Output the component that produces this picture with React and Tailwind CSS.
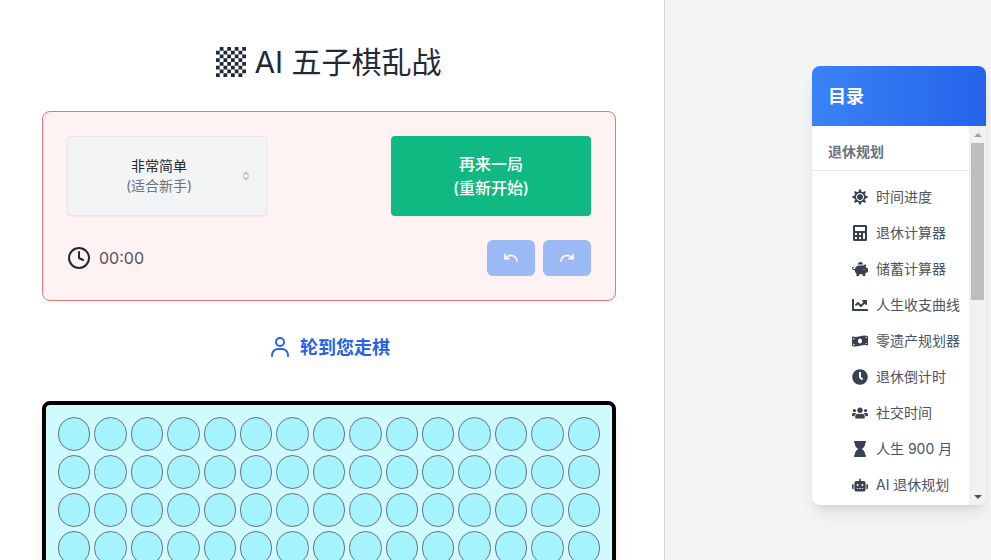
import {
  FaSun,
  FaCalculator,
  FaPiggyBank,
  FaChartLine,
  FaMoneyBillWave,
  FaClock,
  FaUsers,
  FaHourglass,
  FaRobot,
} from 'react-icons/fa';
import { Undo, Redo } from 'lucide-react';

const font = "font-['Inter','Noto_Sans_CJK_SC',sans-serif]";

const retireItems = [
  { icon: FaSun, label: '时间进度' },
  { icon: FaCalculator, label: '退休计算器' },
  { icon: FaPiggyBank, label: '储蓄计算器' },
  { icon: FaChartLine, label: '人生收支曲线' },
  { icon: FaMoneyBillWave, label: '零遗产规划器' },
  { icon: FaClock, label: '退休倒计时' },
  { icon: FaUsers, label: '社交时间' },
  { icon: FaHourglass, label: '人生 900 月' },
  { icon: FaRobot, label: 'AI 退休规划' },
];

const cells = Array.from({ length: 225 }, (_, i) => i);

const Checker = () => {
  const squares = [];
  for (let r = 0; r < 8; r++) {
    for (let c = 0; c < 8; c++) {
      if ((r + c) % 2 === 1) squares.push(<rect key={`${r}-${c}`} x={c} y={r} width="1" height="1" />);
    }
  }
  return (
    <svg viewBox="0 0 8 8" className="w-[30px] h-[30px] fill-[#1f2937] shrink-0">
      {squares}
    </svg>
  );
};

const Section = ({ title, items }) => (
  <div>
    <div className="px-4 pt-4 pb-2 text-sm leading-5 font-bold text-[#6b7280] border-b border-[#e5e7eb]">{title}</div>
    <ul className="py-2">
      {items.map(({ icon: Icon, label }) => (
        <li key={label} className="h-9 pl-[40px] flex items-center gap-2 text-sm text-[#4b5563] whitespace-nowrap">
          <span className="w-4 flex justify-center text-[#374151]">
            <Icon size={16} />
          </span>
          {label}
        </li>
      ))}
    </ul>
  </div>
);

export default function App() {
  return (
    <div className={`h-screen overflow-hidden flex bg-[#f3f4f6] ${font}`}>
      <main className="w-[665px] shrink-0 bg-white border-r border-[#d1d5db] pl-[42px] pr-12 pt-11">
        <h1 className="flex items-center justify-center gap-2 text-[30px] leading-9 text-[#1f2937]">
          <Checker />
          AI 五子棋乱战
        </h1>

        <section className="mt-[31px] bg-[#fef2f2] border border-[#f87171] rounded-lg p-6">
          <div className="flex justify-between">
            <div className="relative w-[200px] h-20 bg-[#f3f4f6] border border-[#e5e7eb] rounded-[4px] shadow-xs flex flex-col justify-center pr-4 text-sm leading-5 text-center">
              <span className="text-[#1f2937]">非常简单</span>
              <span className="text-[#6b7280]">(适合新手)</span>
              <svg viewBox="0 0 20 20" className="absolute right-[14px] top-[33px] w-3 h-3 fill-none stroke-[#6b7280] stroke-[1.5]">
                <path d="M6 8l4-4 4 4M6 12l4 4 4-4" strokeLinecap="round" strokeLinejoin="round" />
              </svg>
            </div>
            <button className="w-[200px] h-20 bg-[#10b981] text-white rounded-[4px] shadow-xs text-base leading-6 font-medium">
              再来一局
              <br />
              (重新开始)
            </button>
          </div>
          <div className="mt-6 flex items-center justify-between">
            <div className="flex items-center gap-2 text-[#4b5563] text-base">
              <svg viewBox="0 0 24 24" className="w-6 h-6 fill-none stroke-[#1f2937] stroke-2">
                <circle cx="12" cy="12" r="10" />
                <path d="M12 6v6l4 2" strokeLinecap="round" strokeLinejoin="round" />
              </svg>
              00:00
            </div>
            <div className="flex gap-2">
              <button className="w-12 h-9 bg-[#3b82f6] opacity-50 rounded-md shadow-xs flex items-center justify-center text-white">
                <Undo size={16} strokeWidth={2.5} />
              </button>
              <button className="w-12 h-9 bg-[#3b82f6] opacity-50 rounded-md shadow-xs flex items-center justify-center text-white">
                <Redo size={16} strokeWidth={2.5} />
              </button>
            </div>
          </div>
        </section>

        <div className="mt-8 mb-10 h-7 flex items-center justify-center gap-2 text-lg font-bold text-[#2563eb]">
          <svg viewBox="0 0 24 24" className="w-6 h-6 fill-none stroke-[#2563eb] stroke-2">
            <circle cx="12" cy="7" r="4" />
            <path d="M4 21v-1a6 6 0 016-6h4a6 6 0 016 6v1" strokeLinecap="round" strokeLinejoin="round" />
          </svg>
          <span className="pt-[2px]">轮到您走棋</span>
        </div>

        <div className="bg-[#cffafe] border-4 border-black rounded-lg p-3 shadow-lg grid grid-cols-[repeat(15,minmax(0,1fr))] gap-1">
          {cells.map((i) => (
            <div key={i} className="h-[34px] rounded-full bg-[#a5f3fc] border border-[#6b7280]" />
          ))}
        </div>
      </main>

      <div className="flex-1 flex justify-end items-start pt-[66px] pr-[5px]">
        <aside className="w-[174px] h-[439px] flex flex-col bg-white rounded-lg shadow-lg overflow-hidden">
          <div className="h-[60px] shrink-0 px-4 pt-[2px] flex items-center text-lg font-bold text-white bg-gradient-to-r from-[#3b82f6] to-[#2563eb]">
            目录
          </div>
          <div className="flex-1 min-h-0 flex">
            <div className="flex-1 min-w-0 overflow-hidden">
              <Section title="退休规划" items={retireItems} />
            </div>
            <div className="w-[17px] shrink-0 bg-[#f1f1f1] flex flex-col items-center">
              <div className="h-[17px] shrink-0 flex items-center justify-center">
                <div className="border-x-[4px] border-x-transparent border-b-[4px] border-b-[#a3a3a3]" />
              </div>
              <div className="w-[13px] h-[157px] bg-[#bdbdbd]" />
              <div className="flex-1" />
              <div className="h-[17px] shrink-0 flex items-center justify-center">
                <div className="border-x-[4px] border-x-transparent border-t-[4px] border-t-[#505050]" />
              </div>
            </div>
          </div>
        </aside>
      </div>
    </div>
  );
}
